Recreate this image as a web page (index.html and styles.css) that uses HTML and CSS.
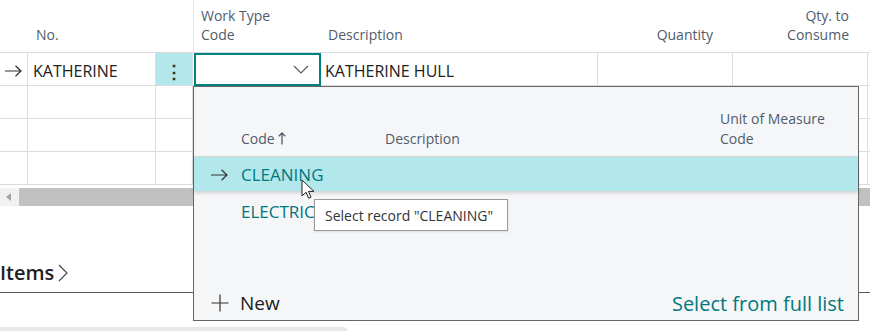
FILE: index.html
```html
<!DOCTYPE html>
<html lang="en">
<head>
    <meta charset="UTF-8">
    <title>Job Journal Lines</title>
    <link rel="stylesheet" href="styles.css">
</head>
<body>

<div class="page">
    <div class="grid">
        <div class="grid-row grid-head">
            <div class="cell c-arrow"></div>
            <div class="cell c-no">No.</div>
            <div class="cell c-dots"></div>
            <div class="cell c-work frozen">Work Type<br>Code</div>
            <div class="cell c-desc">Description</div>
            <div class="cell c-qty num">Quantity</div>
            <div class="cell c-cons num">Qty. to<br>Consume</div>
            <div class="cell c-rest"></div>
        </div>
        <div class="grid-row grid-line current">
            <div class="cell c-arrow">
                <svg width="18" height="12" viewBox="0 0 18 12"><path d="M1 6h16M11.5 0.8L17 6l-5.5 5.2" fill="none" stroke="#333" stroke-width="1.2"/></svg>
            </div>
            <div class="cell c-no">KATHERINE</div>
            <div class="cell c-dots"><span class="dots">&#8942;</span></div>
            <div class="cell c-work">
                <div class="lookup">
                    <svg width="16" height="9" viewBox="0 0 16 9"><path d="M1 1l7 7 7-7" fill="none" stroke="#555" stroke-width="1.1"/></svg>
                </div>
            </div>
            <div class="cell c-desc">KATHERINE HULL</div>
            <div class="cell c-qty"></div>
            <div class="cell c-cons"></div>
            <div class="cell c-rest"></div>
        </div>
        <div class="grid-row grid-line">
            <div class="cell c-arrow"></div><div class="cell c-no"></div><div class="cell c-dots"></div>
            <div class="cell c-work"></div><div class="cell c-desc"></div><div class="cell c-qty"></div>
            <div class="cell c-cons"></div><div class="cell c-rest"></div>
        </div>
        <div class="grid-row grid-line">
            <div class="cell c-arrow"></div><div class="cell c-no"></div><div class="cell c-dots"></div>
            <div class="cell c-work"></div><div class="cell c-desc"></div><div class="cell c-qty"></div>
            <div class="cell c-cons"></div><div class="cell c-rest"></div>
        </div>
        <div class="grid-row grid-line">
            <div class="cell c-arrow"></div><div class="cell c-no"></div><div class="cell c-dots"></div>
            <div class="cell c-work"></div><div class="cell c-desc"></div><div class="cell c-qty"></div>
            <div class="cell c-cons"></div><div class="cell c-rest"></div>
        </div>
        <div class="hscroll">
            <span class="hscroll-arrow"></span>
            <span class="hscroll-thumb"></span>
        </div>
    </div>

    <div class="part-title">
        <span>Items</span>
        <svg width="10" height="18" viewBox="0 0 10 18"><path d="M1 1l8 8-8 8" fill="none" stroke="#444" stroke-width="1.1"/></svg>
    </div>
    <div class="bottom-bar"></div>

    <!-- lookup dropdown -->
    <div class="dropdown">
        <div class="dd-row dd-head">
            <div class="dd-arrow"></div>
            <div class="dd-code">Code
                <svg width="8" height="13" viewBox="0 0 8 13"><path d="M4 12.5V1M0.8 4.2L4 1l3.2 3.2" fill="none" stroke="#505c6d" stroke-width="1.3"/></svg>
            </div>
            <div class="dd-desc">Description</div>
            <div class="dd-uom">Unit of Measure<br>Code</div>
        </div>
        <div class="dd-row dd-item selected">
            <div class="dd-arrow">
                <svg width="18" height="12" viewBox="0 0 18 12"><path d="M1 6h16M11.5 0.8L17 6l-5.5 5.2" fill="none" stroke="#333" stroke-width="1.2"/></svg>
            </div>
            <div class="dd-code link">CLEANING</div>
            <div class="dd-desc"></div>
            <div class="dd-uom"></div>
        </div>
        <div class="dd-row dd-item">
            <div class="dd-arrow"></div>
            <div class="dd-code link">ELECTRICAL</div>
            <div class="dd-desc"></div>
            <div class="dd-uom"></div>
        </div>
        <div class="dd-footer">
            <span class="dd-new">
                <svg width="18" height="18" viewBox="0 0 18 18"><path d="M9 0.5v17M0.5 9h17" fill="none" stroke="#333" stroke-width="1.2"/></svg>
                New
            </span>
            <span class="link full-list">Select from full list</span>
        </div>
    </div>

    <div class="tooltip">Select record "CLEANING"</div>

    <svg class="cursor" width="14" height="21" viewBox="0 0 14 21">
        <path d="M1 1v16l4-3.8 2.6 6 2.4-1-2.5-5.8H13z" fill="#fff" stroke="#222" stroke-width="1" stroke-linejoin="round"/>
    </svg>
</div>

</body>
</html>
```

FILE: styles.css
```css
body {
    margin: 0;
    padding: 0;
    background: #fff;
    font-family: 'Segoe UI', 'Open Sans', sans-serif;
    color: #212121;
    overflow: hidden;
}
.page {
    position: relative;
    width: 870px;
    height: 331px;
    overflow: hidden;
}
.grid-row {
    display: flex;
}
.cell {
    box-sizing: border-box;
    display: flex;
    align-items: center;
    flex: none;
}
.c-arrow { width: 28px; padding-left: 4px; }
.c-no { width: 128px; padding-left: 5px; }
.c-dots { width: 37px; justify-content: center; }
.c-work { width: 128px; }
.c-desc { width: 277px; padding-left: 4px; }
.c-qty { width: 135px; }
.c-cons { width: 135px; }
.c-rest { width: 2px; }

.grid-head {
    height: 53px;
    font-size: 14px;
    line-height: 19px;
    color: #505c6d;
    border-bottom: 1px solid #dcdcdc;
    box-sizing: border-box;
}
.grid-head .cell {
    align-items: flex-end;
    padding-bottom: 8px;
}
.grid-head .c-no { padding-left: 8px; }
.grid-head .c-desc { padding-left: 7px; }
.grid-head .frozen {
    border-left: 1px solid #e4e4e4;
    padding-left: 7px;
}
.grid-head .num {
    justify-content: flex-end;
    text-align: right;
    padding-right: 20px;
}
.grid-head .c-cons { padding-right: 19px; }

.grid-line {
    height: 33px;
    font-size: 16px;
    border-bottom: 1px solid #dcdcdc;
    box-sizing: border-box;
}
.grid-line .cell {
    border-right: 1px solid #dcdcdc;
    padding-top: 3px;
}
.grid-line .c-rest {
    border-right: none;
}
.current .c-dots {
    background: #b2e8eb;
}
.dots {
    font-size: 18px;
    font-weight: bold;
    color: #333;
}
.grid-line .c-work {
    border-right: none;
    padding-top: 0;
}
.lookup {
    box-sizing: border-box;
    width: 128px;
    height: 33px;
    margin-top: 1px;
    margin-left: 1px;
    border: 2px solid #00807f;
    background: #fff;
    display: flex;
    align-items: center;
    justify-content: flex-end;
    padding-right: 10px;
}

.hscroll {
    height: 18px;
    margin-top: 3px;
    background: #f1f1f1;
    display: flex;
    align-items: center;
}
.hscroll-arrow {
    width: 0;
    height: 0;
    margin: 0 8px 0 6px;
    border-top: 4px solid transparent;
    border-bottom: 4px solid transparent;
    border-right: 5px solid #a3a3a3;
}
.hscroll-thumb {
    flex: 1;
    height: 18px;
    background: #c1c1c1;
}

.part-title {
    margin: 53px 0 0 0;
    height: 34px;
    display: flex;
    align-items: center;
    gap: 4px;
    font-size: 20px;
    font-weight: 600;
    color: #212121;
    border-bottom: 1px solid #5a5a5a;
    box-sizing: border-box;
    padding-bottom: 6px;
}
.bottom-bar {
    margin-top: 34px;
    width: 348px;
    height: 8px;
    background: #e7e8ea;
    border-radius: 0 5px 0 0;
}

.dropdown {
    position: absolute;
    left: 193px;
    top: 86px;
    width: 666px;
    height: 235px;
    box-sizing: border-box;
    border: 1px solid #666;
    background: #f5f6f8;
    display: flex;
    flex-direction: column;
}
.dd-row {
    display: flex;
}
.dd-arrow { width: 45px; flex: none; display: flex; justify-content: center; padding-left: 2px; }
.dd-code { width: 144px; flex: none; }
.dd-desc { width: 335px; flex: none; }
.dd-uom { flex: 1; }
.dd-head {
    height: 70px;
    align-items: flex-end;
    padding-bottom: 7px;
    box-sizing: border-box;
    font-size: 14px;
    line-height: 20px;
    color: #505c6d;
    border-bottom: 1px solid #d8d8d8;
}
.dd-head .dd-code svg {
    vertical-align: -1px;
}
.dd-item {
    height: 38px;
    align-items: center;
    font-size: 17px;
    padding-top: 2px;
    box-sizing: border-box;
}
.dd-item.selected {
    height: 34px;
    padding-top: 1px;
    background: #b2e8eb;
    box-shadow: 0 2px 4px rgba(0, 0, 0, 0.16);
}
.link {
    color: #00787d;
}
.dd-footer {
    margin-top: auto;
    height: 34px;
    display: flex;
    align-items: center;
    justify-content: space-between;
    padding: 0 14px 0 17px;
    font-size: 19px;
}
.full-list {
    font-size: 20px;
}
.dd-new {
    display: flex;
    align-items: center;
    gap: 11px;
    color: #212121;
}

.tooltip {
    position: absolute;
    left: 314px;
    top: 199px;
    width: 194px;
    height: 32px;
    box-sizing: border-box;
    border: 1px solid #999;
    background: #fff;
    font-size: 14px;
    color: #333;
    padding-left: 10px;
    display: flex;
    align-items: center;
    box-shadow: 0 1px 2px rgba(0, 0, 0, 0.1);
}
.cursor {
    position: absolute;
    left: 301px;
    top: 179px;
}
```
